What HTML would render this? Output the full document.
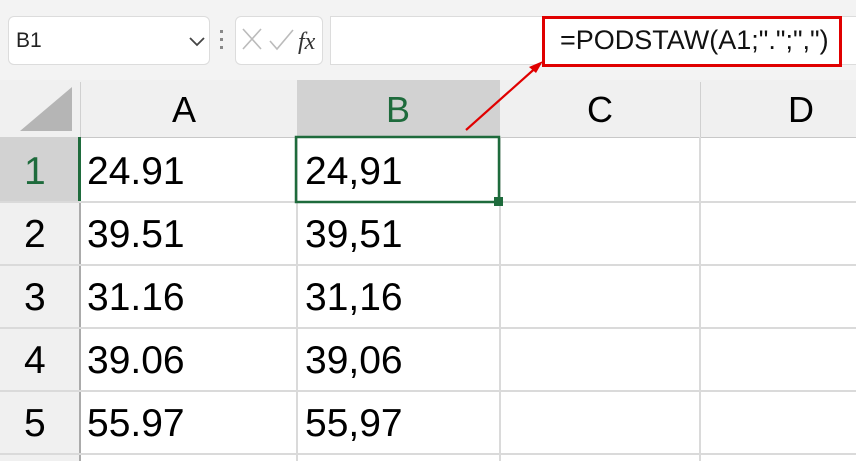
<!DOCTYPE html>
<html><head><style>
body{margin:0;width:856px;height:461px;overflow:hidden;background:#fff;font-family:"Liberation Sans",sans-serif;position:relative}
.a{position:absolute}
</style></head><body>
<div class="a" style="left:0;top:0;width:856px;height:80px;background:#f3f3f3"></div>
<div class="a" style="left:8px;top:16px;width:200px;height:47px;background:#fff;border:1px solid #dcdcdc;border-radius:6px"></div>
<div class="a" style="left:16px;top:29px;font-size:21px;color:#222">B1</div>
<svg class="a" style="left:188px;top:36px" width="18" height="12"><path d="M2 2 L9 9 L16 2" stroke="#444" stroke-width="1.8" fill="none"/></svg>
<div class="a" style="left:220px;top:30px;width:3px;height:3px;background:#888;box-shadow:0 8px 0 #888,0 16px 0 #888"></div>
<div class="a" style="left:235px;top:16px;width:86px;height:47px;background:#fff;border:1px solid #dcdcdc;border-radius:6px"></div>
<svg class="a" style="left:238px;top:25px" width="84" height="32"><path d="M5 4 L23 24 M23 4 L5 24" stroke="#bbb" stroke-width="1.6"/><path d="M32 16 L39 24 L55 5" stroke="#bbb" stroke-width="1.6" fill="none"/><text x="60" y="24" font-family="Liberation Serif" font-style="italic" font-size="24" fill="#333">fx</text></svg>
<div class="a" style="left:330px;top:16px;width:526px;height:47px;background:#fff;border:1px solid #dcdcdc"></div>
<div class="a" style="left:542px;top:16px;width:294px;height:45px;border:3px solid #e00000;background:#fff"></div>
<div class="a" style="left:560px;top:25px;font-size:27px;color:#111">=PODSTAW(A1;".";",")</div>
<div class="a" style="left:0;top:80px;width:856px;height:57px;background:#f0f0f0;border-bottom:1px solid #c8c8c8"></div>
<div class="a" style="left:297px;top:80px;width:203px;height:57px;background:#d2d2d2"></div>
<svg class="a" style="left:18px;top:85px" width="58" height="50"><path d="M54 2 L54 46 L2 46 Z" fill="#b5b5b5"/></svg>
<div class="a" style="left:80px;top:82px;width:1px;height:55px;background:#d0d0d0"></div>
<div class="a" style="left:700px;top:82px;width:1px;height:55px;background:#d0d0d0"></div>
<div class="a" style="left:172px;top:89px;font-size:36px">A</div>
<div class="a" style="left:386px;top:89px;font-size:36px;color:#1e6b3c">B</div>
<div class="a" style="left:587px;top:89px;font-size:36px">C</div>
<div class="a" style="left:788px;top:89px;font-size:36px">D</div>
<div class="a" style="left:0;top:137px;width:79px;height:324px;background:#f0f0f0;border-right:2px solid #ababab"></div>
<div class="a" style="left:0;top:137px;width:78px;height:64px;background:#d2d2d2"></div>
<div class="a" style="left:78px;top:137px;width:3px;height:64px;background:#1e6b3c"></div>
<svg class="a" style="left:0;top:0" width="856" height="461">
<g stroke="#dadada" stroke-width="2">
<line x1="0" y1="202" x2="856" y2="202"/><line x1="0" y1="265" x2="856" y2="265"/><line x1="0" y1="328" x2="856" y2="328"/><line x1="0" y1="391" x2="856" y2="391"/><line x1="0" y1="454" x2="856" y2="454"/>
<line x1="297" y1="137" x2="297" y2="461"/><line x1="500" y1="137" x2="500" y2="461"/><line x1="700" y1="137" x2="700" y2="461"/>
</g>
<rect x="296" y="137" width="203" height="65" fill="none" stroke="#1e6b3c" stroke-width="2.5"/>
<rect x="494" y="197" width="9" height="9" fill="#1e6b3c"/>
<line x1="466" y1="130" x2="540" y2="64" stroke="#e00000" stroke-width="2.2"/>
<path d="M543 61 L529 67 L536 73 Z" fill="#e00000"/>
</svg>
<div class="a" style="left:0;top:0;font-size:39px;line-height:63px">
<div class="a" style="left:24px;top:140px;color:#1e6b3c">1</div>
<div class="a" style="left:24px;top:203px">2</div>
<div class="a" style="left:24px;top:266px">3</div>
<div class="a" style="left:24px;top:329px">4</div>
<div class="a" style="left:24px;top:392px">5</div>
<div class="a" style="left:87px;top:140px">24.91</div>
<div class="a" style="left:87px;top:203px">39.51</div>
<div class="a" style="left:87px;top:266px">31.16</div>
<div class="a" style="left:87px;top:329px">39.06</div>
<div class="a" style="left:87px;top:392px">55.97</div>
<div class="a" style="left:305px;top:140px">24,91</div>
<div class="a" style="left:305px;top:203px">39,51</div>
<div class="a" style="left:305px;top:266px">31,16</div>
<div class="a" style="left:305px;top:329px">39,06</div>
<div class="a" style="left:305px;top:392px">55,97</div>
</div>
</body></html>
